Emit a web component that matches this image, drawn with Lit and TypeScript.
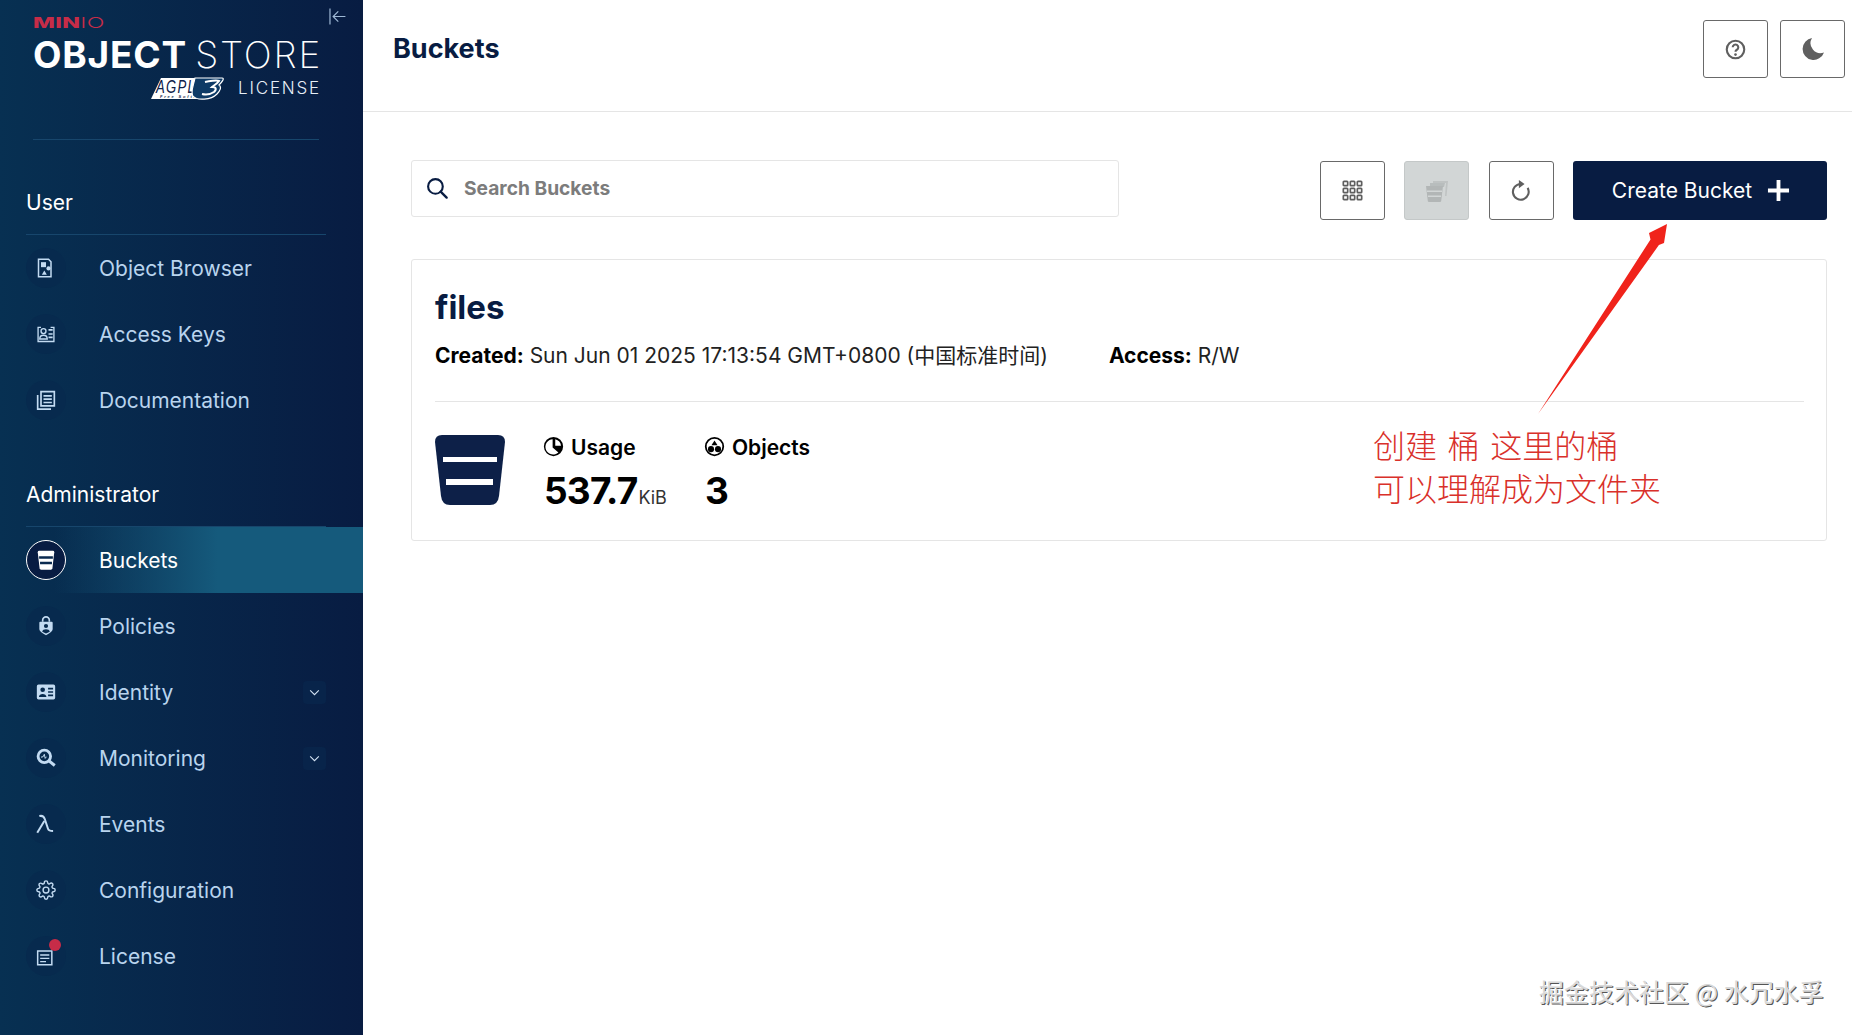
import { LitElement, css, html, svg } from "lit";
import { customElement } from "lit/decorators.js";

const icons: Record<string, unknown> = {
  browser: svg`<path d="M3 1.500h12l3 3v18H3z" fill="none" stroke="currentColor" stroke-width="1.800"/><path d="M6 5h6v6H6z"/><path d="M7 20l3-5 3 5z"/><circle cx="15" cy="12.500" r="2.500"/>`,
  keys: svg`<path d="M6 4H2.500v17h19V4h-4" fill="none" stroke="currentColor" stroke-width="1.600"/><circle cx="9" cy="8.500" r="3" fill="none" stroke="currentColor" stroke-width="1.600"/><path d="M4.500 18c0-6 9-6 9 0z" fill="none" stroke="currentColor" stroke-width="1.600"/><path d="M15 6h5v2h-5zM15 11h5v2h-5zM15 15h5v2h-5z"/>`,
  docs: svg`<path d="M6 2h16v17H6z" fill="none" stroke="currentColor" stroke-width="2"/><path d="M9 6h10v2H9zM9 10h10v2H9zM9 14h10v2H9z"/><path d="M2 6v17h16" fill="none" stroke="currentColor" stroke-width="2"/>`,
  bucket: svg`<path d="M3 3.500Q3 2 4.500 2h15Q21 2 21 3.500L19 21q-.2 1.500-1.700 1.500H6.700Q5.200 22.500 5 21z"/><path d="M4.500 8h15v2.500h-15zM5.500 14h13v2.500h-13z" fill="#0a2a50"/>`,
  policy: svg`<path d="M8 7V5a4 4 0 0 1 8 0v2" fill="none" stroke="currentColor" stroke-width="2"/><path fill-rule="evenodd" d="M5 7h14q1 0 1 1v8q0 3-8 7-8-4-8-7V8q0-1 1-1zM12 9.500a2.500 2.500 0 1 0 0 5 2.500 2.500 0 0 0 0-5zM7.500 19l4.500 2 4.500-2c0-4-9-4-9 0z"/>`,
  identity: svg`<path fill-rule="evenodd" d="M3 3h18q2 0 2 2v14q0 2-2 2H3q-2 0-2-2V5q0-2 2-2zM8 6.500a2.800 2.800 0 1 0 0 5.600 2.800 2.800 0 0 0 0-5.600zM3.500 18h9c0-5-9-5-9 0zM14.500 7v2h6V7zM14.500 11v2h6v-2zM14.500 15v2h6v-2z"/>`,
  monitoring: svg`<circle cx="10" cy="10" r="7.500" fill="none" stroke="currentColor" stroke-width="3.400"/><path d="M15 15l7.500 6" stroke="currentColor" stroke-width="3.600"/><path d="M6 11l2.500-.5 1.500-3 1 5 1.500-2" fill="none" stroke="currentColor" stroke-width="1.200"/>`,
  events: svg`<path d="M4 2.500c4-1 5.500.5 6.500 3.500l4 12c.7 2 2 2.500 6 2.500" fill="none" stroke="currentColor" stroke-width="2.400"/><path d="M1.500 22.500L10 8.500" fill="none" stroke="currentColor" stroke-width="2.400"/>`,
  config: svg`<g fill="none" stroke="currentColor" stroke-width="1.700"><circle cx="12" cy="12" r="3.500"/><path d="M19.400 15a1.650 1.650 0 0 0 .33 1.820l.06.06a2 2 0 0 1 0 2.830 2 2 0 0 1-2.830 0l-.06-.06a1.650 1.650 0 0 0-1.820-.33 1.650 1.650 0 0 0-1 1.510V21a2 2 0 0 1-2 2 2 2 0 0 1-2-2v-.09A1.650 1.650 0 0 0 9 19.400a1.650 1.650 0 0 0-1.820.33l-.06.06a2 2 0 0 1-2.830 0 2 2 0 0 1 0-2.830l.06-.06a1.650 1.650 0 0 0 .33-1.820 1.650 1.650 0 0 0-1.510-1H3a2 2 0 0 1-2-2 2 2 0 0 1 2-2h.09A1.650 1.650 0 0 0 4.600 9a1.650 1.650 0 0 0-.33-1.820l-.06-.06a2 2 0 0 1 0-2.830 2 2 0 0 1 2.830 0l.06.06a1.650 1.650 0 0 0 1.820.33H9a1.650 1.650 0 0 0 1-1.510V3a2 2 0 0 1 2-2 2 2 0 0 1 2 2v.09a1.650 1.650 0 0 0 1 1.510 1.650 1.650 0 0 0 1.820-.33l.06-.06a2 2 0 0 1 2.830 0 2 2 0 0 1 0 2.830l-.06.06a1.650 1.650 0 0 0-.33 1.820V9a1.650 1.650 0 0 0 1.510 1H21a2 2 0 0 1 2 2 2 2 0 0 1-2 2h-.09a1.650 1.650 0 0 0-1.510 1z"/></g>`,
  license: svg`<path d="M2 6h17v16.500H2z" fill="none" stroke="currentColor" stroke-width="1.800"/><path d="M5 10h11v1.600H5zM5 14h11v1.600H5zM5 18h7v1.600H5z"/>`,
  help: svg`<circle cx="12" cy="12" r="10" fill="none" stroke="currentColor" stroke-width="2.400"/><path d="M8.800 9.500a3.200 3.200 0 1 1 4.800 2.800c-1 .6-1.600 1-1.600 2.300" fill="none" stroke="currentColor" stroke-width="2.400"/><circle cx="12" cy="17.800" r="1.500"/>`,
  moon: svg`<path d="M11 1a11 11 0 1 0 12 14.500A10 10 0 0 1 11 1z"/>`,
  grid: svg`<g fill="none" stroke="currentColor" stroke-width="1.900"><rect x="1.500" y="1.500" width="5" height="5" rx=".8"/><rect x="9.500" y="1.500" width="5" height="5" rx=".8"/><rect x="17.500" y="1.500" width="5" height="5" rx=".8"/><rect x="1.500" y="9.500" width="5" height="5" rx=".8"/><rect x="9.500" y="9.500" width="5" height="5" rx=".8"/><rect x="17.500" y="9.500" width="5" height="5" rx=".8"/><rect x="1.500" y="17.500" width="5" height="5" rx=".8"/><rect x="9.500" y="17.500" width="5" height="5" rx=".8"/><rect x="17.500" y="17.500" width="5" height="5" rx=".8"/></g>`,
  multi: svg`<path d="M8 2h15l-1.500 15H20L21 4H8z" opacity=".6"/><path d="M5 4h15l-1 4H5z" opacity=".8"/><path d="M1 7h17l-1.800 15q-.1 1-1.200 1H4q-1.100 0-1.200-1z"/><path d="M2 11.500h15v1.500H2zM3 16.500h13v1.500H3z" fill="#d2d6d6"/>`,
  refresh: svg`<path d="M19 9a9 9 0 1 1-8-4.500" fill="none" stroke="currentColor" stroke-width="2.400"/><path d="M9 0l6.500 4.500L9 9.500z"/>`,
  search: svg`<circle cx="10.300" cy="10.300" r="8" fill="none" stroke="currentColor" stroke-width="2.300"/><path d="M16 16l6.500 6.500" stroke="currentColor" stroke-width="2.500" stroke-linecap="round"/>`,
  usage: svg`<path fill-rule="evenodd" d="M12 1a11 11 0 1 0 0 22 11 11 0 0 0 0-22zM11 3.600v9.400l6.600 5.800A8.800 8.800 0 1 1 11 3.600zM14 3.600a8.800 8.800 0 0 1 6.600 7.400H14z"/>`,
  objects: svg`<path fill-rule="evenodd" d="M12 1a11 11 0 1 0 0 22 11 11 0 0 0 0-22zM12 3a9 9 0 1 1 0 18 9 9 0 0 1 0-18z"/><path d="M12 5l3.500 5.500h-7z"/><circle cx="8" cy="15" r="3.500"/><circle cx="16" cy="15" r="3.500"/>`,
  plus: svg`<path d="M10 1h4v9h9v4h-9v9h-4v-9H1v-4h9z"/>`,
  chevron: svg`<path d="M4 8l8 8 8-8" fill="none" stroke="currentColor" stroke-width="2"/>`,
  collapse: svg`<path d="M2.500 2v20" fill="none" stroke="currentColor" stroke-width="1.500"/><path d="M22 12H7M13 5.500L6.500 12l6.500 6.500" fill="none" stroke="currentColor" stroke-width="1.500"/>`,
};

const icon = (name: string) =>
  html`<svg viewBox="0 0 24 24" fill="currentColor">${icons[name]}</svg>`;

type Item = { label: string; icon: string; active?: boolean; more?: boolean; dot?: boolean };

const userItems: Item[] = [
  { label: "Object Browser", icon: "browser" },
  { label: "Access Keys", icon: "keys" },
  { label: "Documentation", icon: "docs" },
];

const adminItems: Item[] = [
  { label: "Buckets", icon: "bucket", active: true },
  { label: "Policies", icon: "policy" },
  { label: "Identity", icon: "identity", more: true },
  { label: "Monitoring", icon: "monitoring", more: true },
  { label: "Events", icon: "events" },
  { label: "Configuration", icon: "config" },
  { label: "License", icon: "license", dot: true },
];

@customElement("app-root")
export class AppRoot extends LitElement {
  static styles = css`
    :host {
      display: flex;
      width: 100%;
      height: 1035px;
      overflow: hidden;
      position: relative;
      background: #fff;
      color: #000;
      font-family: Inter, "Noto Sans CJK SC", sans-serif;
    }

    svg {
      display: block;
    }

    aside {
      flex: none;
      width: 363px;
      height: 100%;
      position: relative;
      background: linear-gradient(90deg, #073052 0%, #081c42 100%);
      color: #fff;
    }

    .collapse {
      position: absolute;
      left: 328px;
      top: 7px;
      width: 19px;
      height: 19px;
      color: #9fb9d6;
    }

    .logo {
      height: 140px;
      margin: 0 44px 0 33px;
      padding-top: 15px;
      box-sizing: border-box;
      border-bottom: 1px solid #17466c;
    }

    .minio {
      height: 15px;
      font-size: 15px;
      line-height: 15px;
      letter-spacing: 0.2px;
      color: #c72c48;
      font-weight: 300;
      transform: scaleX(1.55);
      transform-origin: left center;
    }

    .minio b {
      font-weight: 800;
    }

    .product {
      margin-top: 3px;
      font-size: 37px;
      line-height: 44px;
      white-space: nowrap;
      font-weight: 200;
      letter-spacing: 1.8px;
      word-spacing: -4px;
    }

    .product b {
      font-weight: 700;
      letter-spacing: 0.8px;
    }

    .license {
      display: flex;
      justify-content: flex-end;
      align-items: center;
      gap: 14px;
      margin-top: -1px;
      margin-right: -2px;
      font-size: 17px;
      font-weight: 300;
      letter-spacing: 1.8px;
      color: #e6eef6;
    }

    .agpl {
      width: 73px;
      height: 24px;
    }

    .section {
      margin: 0 37px 0 26px;
      padding-top: 48px;
      height: 46px;
      border-bottom: 1px solid #17466c;
      font-size: 21px;
      line-height: 30px;
    }

    .section.admin {
      padding-top: 47px;
      height: 46px;
    }

    .item {
      display: flex;
      align-items: center;
      height: 66px;
      padding-left: 26px;
      color: #b9d4ee;
      font-size: 21px;
      position: relative;
    }

    .item.active {
      color: #fff;
      background: linear-gradient(90deg, rgba(21, 90, 124, 0) 15%, #155a7c 60%);
    }

    .badge {
      flex: none;
      width: 40px;
      height: 40px;
      border-radius: 50%;
      display: flex;
      align-items: center;
      justify-content: center;
      background: #072a4e;
      box-sizing: border-box;
      position: relative;
      color: #c3dbf2;
    }

    .badge svg {
      width: 20px;
      height: 20px;
    }

    .active .badge {
      background: #081c42;
      border: 1px solid #fff;
      color: #fff;
    }

    .active .badge svg {
      width: 22px;
      height: 22px;
    }

    .dot {
      position: absolute;
      left: 23px;
      top: 3px;
      width: 12px;
      height: 12px;
      border-radius: 50%;
      background: #c72c48;
    }

    .label {
      margin-left: 33px;
      flex: 1;
    }

    .more {
      width: 23px;
      height: 23px;
      margin-right: 37px;
      background: #08244a;
      border-radius: 4px;
      display: flex;
      align-items: center;
      justify-content: center;
      color: #d4e4f4;
    }

    .more svg {
      width: 13px;
      height: 13px;
    }

    main {
      flex: 1;
      min-width: 0;
    }

    header {
      height: 112px;
      box-sizing: border-box;
      border-bottom: 1px solid #e5e5e5;
      padding: 21px 7px 0 30px;
      display: flex;
      justify-content: space-between;
      align-items: flex-start;
    }

    h1 {
      margin: 0;
      font-size: 27px;
      line-height: 56px;
      font-weight: 700;
      color: #081c42;
    }

    .actions {
      display: flex;
      gap: 12px;
      margin-top: -1px;
    }

    .btn {
      width: 65px;
      height: 59px;
      box-sizing: border-box;
      border: 1px solid #696969;
      border-radius: 3px;
      background: #fff;
      color: #5f5f5f;
      display: flex;
      align-items: center;
      justify-content: center;
    }

    .btn svg {
      width: 21px;
      height: 21px;
    }

    .actions .btn {
      height: 58px;
    }

    .actions .btn.moon svg {
      width: 24px;
      height: 24px;
    }

    .content {
      padding: 48px 25px 0 48px;
    }

    .toolbar {
      display: flex;
      align-items: flex-start;
    }

    .search {
      width: 708px;
      height: 57px;
      box-sizing: border-box;
      border: 1px solid #e5e5e5;
      border-radius: 3px;
      display: flex;
      align-items: center;
      padding: 0 0 2px 14px;
      margin-right: auto;
      font-size: 19.2px;
      font-weight: 700;
      color: #7c7c7c;
    }

    .search svg {
      width: 22px;
      height: 22px;
      margin-right: 16px;
      color: #081c42;
    }

    .tools {
      display: flex;
      gap: 19px;
      margin-top: 1px;
    }

    .btn.disabled {
      background: #d2d6d6;
      border-color: #c4c8c8;
      color: #b2b6b6;
      margin-right: 1px;
    }

    .btn.disabled svg {
      width: 24px;
      height: 24px;
    }

    .create {
      width: 254px;
      height: 59px;
      box-sizing: border-box;
      padding-left: 2px;
      border-radius: 3px;
      background: #081c42;
      color: #fff;
      display: flex;
      align-items: center;
      justify-content: center;
      gap: 15px;
      font-size: 21px;
    }

    .create svg {
      width: 23px;
      height: 23px;
    }

    .card {
      margin-top: 39px;
      height: 282px;
      box-sizing: border-box;
      border: 1px solid #e5e5e5;
      border-radius: 3px;
      padding: 20px 22px 0 23px;
    }

    .name {
      font-size: 33px;
      line-height: 54px;
      font-weight: 700;
      color: #081c42;
    }

    .meta {
      display: flex;
      gap: 61px;
      margin-top: 7px;
      font-size: 21px;
      line-height: 30px;
      color: #222;
    }

    .meta b {
      color: #000;
      font-weight: 700;
    }

    .card hr {
      margin: 30px 0 0;
      border: 0;
      border-top: 1px solid #e5e5e5;
    }

    .stats {
      display: flex;
      margin-top: 33px;
    }

    .bucket {
      width: 70px;
      height: 70px;
      color: #0d2048;
    }

    .stat {
      margin-left: 38px;
      padding-top: 1px;
    }

    .stat + .stat {
      margin-left: 37px;
    }

    .stat .head {
      display: flex;
      align-items: center;
      gap: 7px;
      font-size: 21px;
      line-height: 24px;
      font-weight: 600;
    }

    .stat .head svg {
      width: 21px;
      height: 21px;
      margin-top: -3px;
    }

    .stat .value {
      margin-top: 7px;
      margin-left: 1px;
      font-size: 37px;
      line-height: 48px;
      font-weight: 700;
      letter-spacing: -0.8px;
    }

    .stat .value small {
      font-size: 18px;
      font-weight: 400;
      margin-left: 1px;
      letter-spacing: 0;
      color: #333;
    }

    .arrow {
      position: absolute;
      left: 0;
      top: 0;
      pointer-events: none;
    }

    .note {
      position: absolute;
      left: 1373px;
      top: 423px;
      font-size: 32px;
      line-height: 43px;
      font-weight: 300;
      word-spacing: 3.500px;
      color: #d9302a;
      white-space: pre;
      font-family: "Noto Sans CJK SC", sans-serif;
    }

    .mark {
      position: absolute;
      left: 1539px;
      top: 973px;
      font-size: 25px;
      line-height: 36px;
      color: #d8d8d8;
      white-space: pre;
      font-family: "Noto Sans CJK SC", sans-serif;
      text-shadow: -1px -1px 0 #fff, 1px 1px 0 #555;
    }
  `;

  renderItem(item: Item) {
    return html`<div class="item ${item.active ? "active" : ""}">
      <span class="badge">
        ${icon(item.icon)}
        ${item.dot ? html`<span class="dot"></span>` : ""}
      </span>
      <span class="label">${item.label}</span>
      ${item.more ? html`<span class="more">${icon("chevron")}</span>` : ""}
    </div>`;
  }

  render() {
    return html`
      <aside>
        <span class="collapse">${icon("collapse")}</span>
        <div class="logo">
          <div class="minio"><b>MIN</b>IO</div>
          <div class="product"><b>OBJECT</b> STORE</div>
          <div class="license">
            <svg class="agpl" viewBox="0 0 73 24">
              <path d="M0 23L10 2h40l-4 21z" fill="#fff" />
              <text x="5" y="17" font-size="19" font-style="italic" fill="#0d2048" font-family="Liberation Sans" textLength="40" lengthAdjust="spacingAndGlyphs">AGPL</text>
              <text x="9" y="22" font-size="4" font-weight="700" font-style="italic" fill="#0d2048" font-family="Liberation Sans">Free Software</text>
              <path d="M44 2h27c3 0 0 4-3 7 3 2 1 6-2 9-6 6-20 7-24 2-3-4 1-12 2-18z" fill="#0d3a66" stroke="#fff" stroke-width="1.200" />
              <path d="M54 6c4-1 12-2 14-1-2 3-5 4-7 6 4 0 5 2 2 5-3 2-8 3-12 2" fill="none" stroke="#fff" stroke-width="2" />
            </svg>
            <span>LICENSE</span>
          </div>
        </div>
        <div class="section">User</div>
        ${userItems.map((i) => this.renderItem(i))}
        <div class="section admin">Administrator</div>
        ${adminItems.map((i) => this.renderItem(i))}
      </aside>
      <main>
        <header>
          <h1>Buckets</h1>
          <div class="actions">
            <div class="btn">${icon("help")}</div>
            <div class="btn moon">${icon("moon")}</div>
          </div>
        </header>
        <div class="content">
          <div class="toolbar">
            <div class="search">${icon("search")}<span>Search Buckets</span></div>
            <div class="tools">
              <div class="btn">${icon("grid")}</div>
              <div class="btn disabled">${icon("multi")}</div>
              <div class="btn">${icon("refresh")}</div>
              <div class="create"><span>Create Bucket</span>${icon("plus")}</div>
            </div>
          </div>
          <div class="card">
            <div class="name">files</div>
            <div class="meta">
              <span><b>Created:</b> Sun Jun 01 2025 17:13:54 GMT+0800 (中国标准时间)</span>
              <span><b>Access:</b> R/W</span>
            </div>
            <hr />
            <div class="stats">
              <div class="bucket">
                <svg viewBox="0 0 70 70" fill="currentColor">
                  <path d="M0 7Q0 0 7 0h56q7 0 7 7l-6 54q-1 9-9 9H15q-8 0-9-9z" />
                  <path d="M8 22h54v5H8zM11 44h47v6H11z" fill="#fff" />
                </svg>
              </div>
              <div class="stat">
                <div class="head">${icon("usage")}<span>Usage</span></div>
                <div class="value">537.7<small>KiB</small></div>
              </div>
              <div class="stat">
                <div class="head">${icon("objects")}<span>Objects</span></div>
                <div class="value">3</div>
              </div>
            </div>
          </div>
        </div>
      </main>
      <svg class="arrow" width="1852" height="1035">
        <path d="M1538 414L1650.500 239.500 1649 233 1667 224 1664 243 1658.900 245.100z" fill="#f0231b" />
      </svg>
      <div class="note">创建 桶 这里的桶
可以理解成为文件夹</div>
      <div class="mark">掘金技术社区 @ 水冗水孚</div>
    `;
  }
}
